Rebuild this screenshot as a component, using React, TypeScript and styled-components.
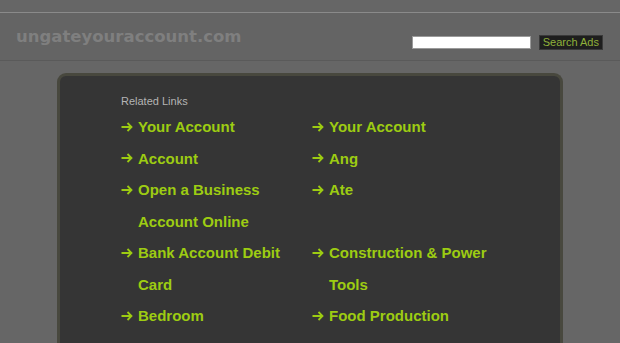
import React from 'react';
import styled, { createGlobalStyle } from 'styled-components';

const GlobalStyle = createGlobalStyle`
    html, body {
        margin: 0;
        padding: 0;
        background: #666666;
        font-family: "Liberation Sans", Arial, sans-serif;
    }
`;

// rows of the related links table, left and right
const links: [string, string][] = [
    ['Your Account', 'Your Account'],
    ['Account', 'Ang'],
    ['Open a Business Account Online', 'Ate'],
    ['Bank Account Debit Card', 'Construction & Power Tools'],
    ['Bedroom', 'Food Production'],
];

const Page = styled.div`
    width: 620px;
    height: 343px;
    overflow: hidden;
    padding-top: 12px;
    box-sizing: border-box;
`;

const Header = styled.header`
    height: 47px;
    border-top: 1px solid #8a8a8a;
    border-bottom: 1px solid #5a5a5a;
    background: #646464;
    display: flex;
    align-items: flex-end;
    padding: 0 17px 10px 16px;
    box-sizing: content-box;
    height: 37px;
`;

const Domain = styled.div`
    flex: 1;
    font-family: "DejaVu Sans", Verdana, sans-serif;
    font-size: 16.5px;
    font-weight: bold;
    color: #7f7f7f;
    line-height: 20px;
    margin-bottom: 3px;
`;

const SearchForm = styled.form`
    display: flex;
    align-items: center;
    gap: 8px;
    margin: 0;
`;

const SearchInput = styled.input`
    width: 119px;
    height: 13px;
    box-sizing: border-box;
    border: 1px solid #9a9a9a;
    background: #fff;
    padding: 0;
    margin: 0;
`;

const SearchButton = styled.button`
    height: 15px;
    padding: 0 3px;
    border: 1px solid #3a3a3a;
    background: #1e1e1e;
    color: #8fb13a;
    font-family: "Liberation Sans", Arial, sans-serif;
    font-size: 11px;
    line-height: 13px;
`;

const Panel = styled.main`
    margin: 12px 0 0 57px;
    width: 506px;
    height: 300px;
    box-sizing: border-box;
    background: #353535;
    border: 3px solid #48483e;
    border-bottom: none;
    border-radius: 9px 9px 0 0;
    padding: 18px 0 0 61px;
`;

const Title = styled.div`
    font-size: 11px;
    color: #b4b4b4;
    line-height: 14px;
    margin-bottom: 3px;
`;

const Grid = styled.div`
    display: grid;
    grid-template-columns: 191px 191px;
    align-items: start;
`;

const Item = styled.div`
    display: flex;
    font-size: 15px;
    font-weight: bold;
    line-height: 31.5px;
    color: #9dcc12;
`;

const Arrow = styled.span`
    width: 17px;
    flex: none;
    display: flex;
    align-items: center;
    height: 31.5px;
`;

const LinkText = styled.a`
    width: 165px;
    color: inherit;
    text-decoration: none;
`;

const ArrowIcon = () => (
    <svg width="12" height="10" viewBox="0 0 12 10" fill="none">
        <path d="M0.5 5H10.5M6.5 1L10.5 5L6.5 9" stroke="#9dcc12" strokeWidth="1.8" />
    </svg>
);

export default function App() {
    return (
        <Page>
            <GlobalStyle />
            <Header>
                <Domain>ungateyouraccount.com</Domain>
                <SearchForm onSubmit={(e) => e.preventDefault()}>
                    <SearchInput type="text" />
                    <SearchButton type="submit">Search Ads</SearchButton>
                </SearchForm>
            </Header>
            <Panel>
                <Title>Related Links</Title>
                <Grid>
                    {links.flat().map((l, i) => (
                        <Item key={i}>
                            <Arrow><ArrowIcon /></Arrow>
                            <LinkText href="#">{l}</LinkText>
                        </Item>
                    ))}
                </Grid>
            </Panel>
        </Page>
    );
}
